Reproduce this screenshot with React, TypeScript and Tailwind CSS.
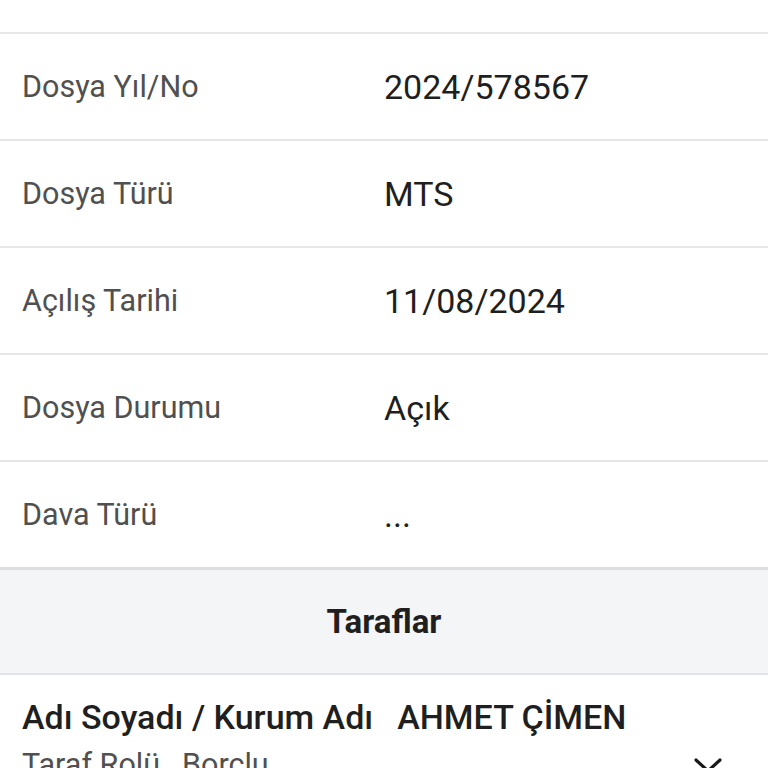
import * as React from "react"

// ── Detail rows ───────────────────────────────────────────────────────────────

const rows: { label: string; value: string }[] = [
  { label: "Dosya Yıl/No", value: "2024/578567" },
  { label: "Dosya Türü", value: "MTS" },
  { label: "Açılış Tarihi", value: "11/08/2024" },
  { label: "Dosya Durumu", value: "Açık" },
  { label: "Dava Türü", value: "..." },
]

function DetailRow({ label, value }: { label: string; value: string }) {
  return (
    <div className="flex h-[107px] items-center border-t-2 border-[#e6e6e6]">
      <div className="w-[384px] pl-[22px] text-[30.5px] leading-[36px] text-[#505050]">{label}</div>
      <div className="text-[34px] leading-[40px] text-[#1f1f1f]">{value}</div>
    </div>
  )
}

function ChevronDown() {
  return (
    <svg width="28" height="18" viewBox="0 0 28 18" fill="none" aria-hidden="true">
      <path d="M2 2 L14 13 L26 2" stroke="#1a1a1a" strokeWidth="3.2" strokeLinecap="round" strokeLinejoin="round" />
    </svg>
  )
}

export default function App() {
  return (
    <div className="h-[768px] w-[768px] overflow-hidden bg-white" style={{ fontFamily: "Roboto, 'Noto Sans', sans-serif" }}>
      <div className="h-[32px]" />
      {rows.map((r) => (
        <DetailRow key={r.label} label={r.label} value={r.value} />
      ))}

      <div className="flex h-[108px] items-center justify-center border-t-[3px] border-b-2 border-t-[#dedede] border-b-[#e3e3e3] bg-[#f4f5f7]">
        <span className="text-[33px] font-bold leading-[40px] text-[#1f1f1f]">Taraflar</span>
      </div>

      <div className="flex items-start justify-between pt-[22px] pl-[22px] pr-[46px]">
        <div>
          <div className="flex gap-[24px] text-[34px] font-medium leading-[40px] text-[#1f1f1f]">
            <span>Adı Soyadı / Kurum Adı</span>
            <span>AHMET ÇİMEN</span>
          </div>
          <div className="mt-[10px] flex gap-[22px] text-[30.5px] leading-[36px] text-[#505050]">
            <span>Taraf Rolü</span>
            <span>Borçlu</span>
          </div>
        </div>
        <div className="mt-[61px]">
          <ChevronDown />
        </div>
      </div>
    </div>
  )
}
